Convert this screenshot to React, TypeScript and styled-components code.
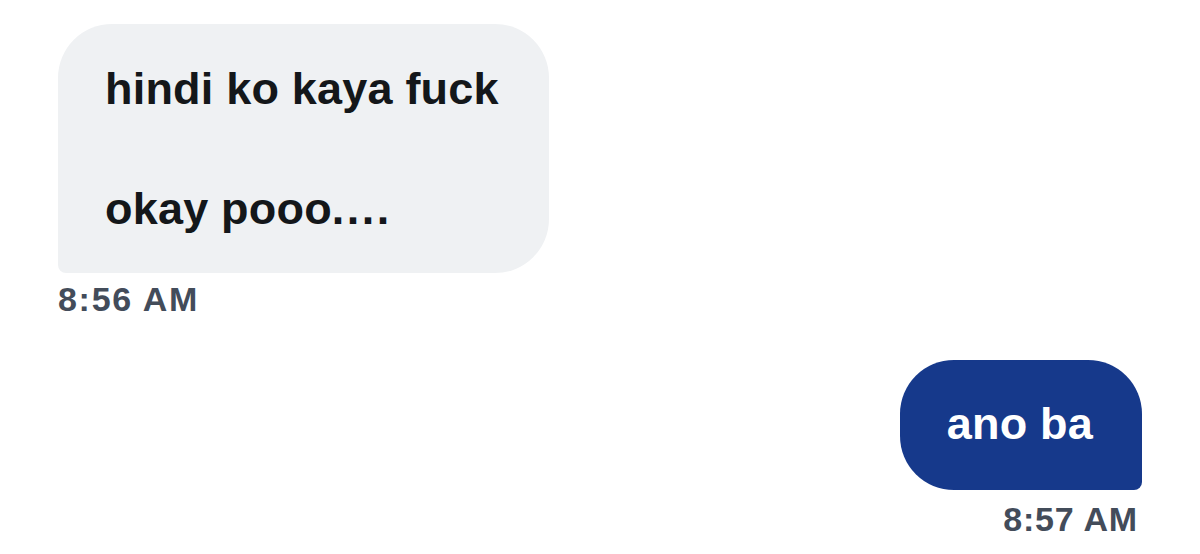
import React from "react";
import styled, { createGlobalStyle } from "styled-components";

const Global = createGlobalStyle`
  html, body { margin: 0; padding: 0; background: #ffffff; }
  body { font-family: "Liberation Sans", Arial, sans-serif; }
`;

const Thread = styled.div`
  display: flex;
  flex-direction: column;
  padding: 24px 58px 0 58px;
  width: 1200px;
  height: 554px;
  box-sizing: border-box;
`;

const Group = styled.div<{ $mine?: boolean }>`
  display: flex;
  flex-direction: column;
  align-items: ${(p) => (p.$mine ? "flex-end" : "flex-start")};
  margin-top: ${(p) => (p.$mine ? "44px" : "0")};
`;

const Bubble = styled.div<{ $mine?: boolean }>`
  display: flex;
  flex-direction: column;
  gap: 60px;
  background: ${(p) => (p.$mine ? "#16398b" : "#eff1f3")};
  color: ${(p) => (p.$mine ? "#ffffff" : "#14171a")};
  font-size: 45px;
  font-weight: 700;
  letter-spacing: 0.2px;
  line-height: 60px;
  padding: ${(p) => (p.$mine ? "34px 49px 36px 47px" : "35px 50px 34px 47px")};
  border-radius: ${(p) => (p.$mine ? "54px 54px 8px 54px" : "54px 54px 54px 8px")};
`;

const Line = styled.div`
  white-space: nowrap;
`;

const Dots = styled.span`
  letter-spacing: 2.5px;
`;

const Time = styled.div<{ $mine?: boolean }>`
  font-size: 34px;
  font-weight: 700;
  letter-spacing: ${(p) => (p.$mine ? "0.8px" : "1.7px")};
  line-height: 34px;
  color: #434c5a;
  margin-top: ${(p) => (p.$mine ? "12px" : "9px")};
  margin-right: ${(p) => (p.$mine ? "4px" : "0")};
`;

export default function App() {
  return (
    <>
      <Global />
      <Thread>
        <Group>
          <Bubble>
            <Line>hindi ko kaya fuck</Line>
            <Line>
              okay pooo<Dots>....</Dots>
            </Line>
          </Bubble>
          <Time>8:56 AM</Time>
        </Group>
        <Group $mine>
          <Bubble $mine>
            <Line>ano ba</Line>
          </Bubble>
          <Time $mine>8:57 AM</Time>
        </Group>
      </Thread>
    </>
  );
}
